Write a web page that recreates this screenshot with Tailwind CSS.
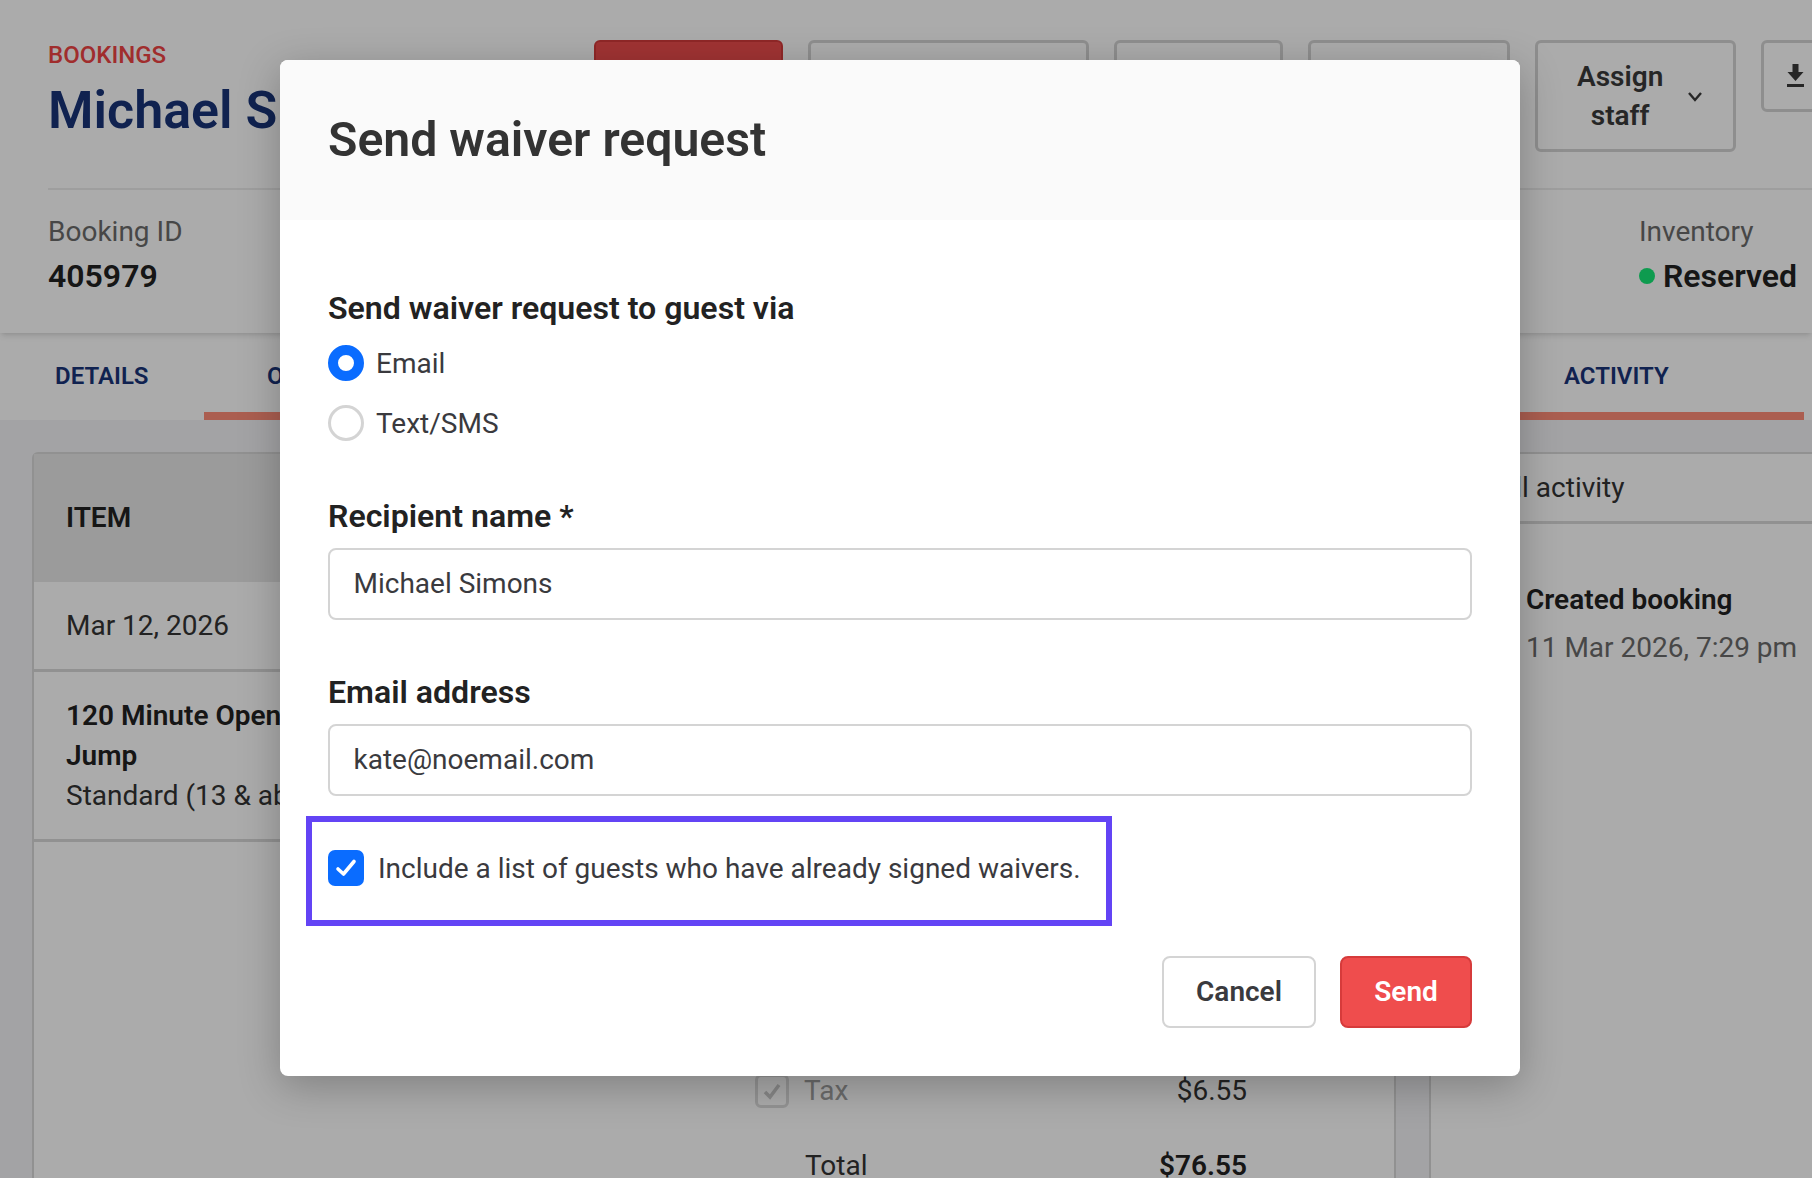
<!DOCTYPE html>
<html>
<head>
<meta charset="utf-8">
<script src="https://cdn.jsdelivr.net/npm/@tailwindcss/browser@4"></script>
</head>
<body class="font-['Roboto',sans-serif]">
<div class="relative w-[1812px] h-[1178px] overflow-hidden bg-[#f3f4f6]">
  <!-- page -->
  <div class="relative z-10 bg-white shadow-md h-[333px]">
    <div class="flex justify-between ml-[48px] h-[190px] border-b-[2px] border-[#ececec]">
      <div class="pt-[40px]">
        <div class="text-[24px] leading-[30px] font-medium text-[#ef4444]">BOOKINGS</div>
        <div class="text-[52px] leading-[60px] mt-[11px] font-semibold text-[#183478] whitespace-nowrap">Michael Simons</div>
      </div>
      <div class="flex items-start gap-[25px] pt-[40px] -mr-[59px]">
        <div class="w-[189px] h-[72px] rounded-[6px] bg-[#ef4d4d] border-[2px] border-[#d63b3b]"></div>
        <div class="w-[281px] h-[72px] rounded-[6px] border-[3px] border-[#d4d4d4]"></div>
        <div class="w-[169px] h-[72px] rounded-[6px] border-[3px] border-[#d4d4d4]"></div>
        <div class="w-[202px] h-[72px] rounded-[6px] border-[3px] border-[#d4d4d4]"></div>
        <div class="w-[201px] h-[112px] rounded-[6px] border-[3px] border-[#d4d4d4] flex items-center gap-[23px] text-[28px] leading-[39px] font-semibold text-[#3a3a3a] text-center pl-[39px]">
          <span>Assign<br>staff</span>
          <svg class="w-[18px] h-[18px]" viewBox="0 0 18 18" fill="none" stroke="#3a3a3a" stroke-width="2.4"><path d="M3 6l6 7 6-7"/></svg>
        </div>
        <div class="w-[110px] h-[72px] rounded-[6px] border-[3px] border-[#d4d4d4] pl-[22px] pt-[21px]">
          <svg class="w-[19px] h-[23px]" viewBox="0 0 19 23" fill="#3a3a3a"><path d="M6.500 0h6v8h5l-8 9-8-9h5zM1 20h17v3H1z"/></svg>
        </div>
      </div>
    </div>
    <div class="flex justify-between pl-[48px] pr-[15px] pt-[25px]">
      <div>
        <div class="text-[28px] leading-[34px] text-[#6b6b6b]">Booking ID</div>
        <div class="text-[32px] leading-[40px] mt-[7px] font-semibold text-[#222]">405979</div>
      </div>
      <div>
        <div class="text-[28px] leading-[34px] text-[#6b6b6b]">Inventory</div>
        <div class="flex items-center gap-[8px] mt-[7px]">
          <span class="w-[16px] h-[16px] rounded-full bg-[#16e877]"></span>
          <span class="text-[32px] leading-[40px] font-semibold text-[#222]">Reserved</span>
        </div>
      </div>
    </div>
  </div>
  <div class="relative h-[87px] bg-white flex items-center text-[24px] font-semibold text-[#183478]">
    <span class="absolute left-[55px] top-[28px] leading-[30px]">DETAILS</span>
    <span class="absolute left-[267px] top-[28px] leading-[30px]">ORDER</span>
    <span class="absolute left-[1564px] top-[28px] leading-[30px]">ACTIVITY</span>
    <div class="absolute left-[204px] right-[8px] bottom-0 h-[8px] bg-[#ff8d78]"></div>
  </div>
  <div class="flex gap-[33px] pl-[32px] pt-[32px]">
    <div class="w-[1364px] h-[760px] bg-white border-x-[2px] border-t-[2px] border-[#d8d8d8] rounded-t-[6px] relative">
      <div class="h-[128px] bg-[#e8e8e8] px-[32px] flex items-center text-[28px] font-semibold text-[#222]">ITEM</div>
      <div class="h-[90px] px-[32px] flex items-center border-b-[3px] border-[#d8d8d8] text-[28px] text-[#333]">Mar 12, 2026</div>
      <div class="h-[170px] px-[32px] pt-[24px] border-b-[3px] border-[#d8d8d8] text-[28px] leading-[40px] text-[#333]">
        <div class="font-semibold text-[#222] w-[260px]">120 Minute Open Jump</div>
        <div>Standard (13 &amp; above)</div>
      </div>
      <div class="absolute left-[721px] top-[620px] w-[34px] h-[34px] rounded-[6px] border-[3px] border-[#dcdcdc] flex items-center justify-center">
        <svg class="w-[20px] h-[20px]" viewBox="0 0 20 20" fill="none" stroke="#c9c9c9" stroke-width="3.5"><path d="M3 11l5 5 9-12"/></svg>
      </div>
      <div class="absolute left-[770px] right-[147px] top-[617px] flex justify-between text-[28px] leading-[40px]">
        <span class="text-[#a0a0a0]">Tax</span><span class="text-[#333]">$6.55</span>
      </div>
      <div class="absolute left-[771px] right-[147px] top-[700px] flex justify-between text-[28px] leading-[24px] text-[#333]">
        <span>Total</span><span class="font-semibold text-[#222]">$76.55</span>
      </div>
    </div>
    <div class="flex-1 h-[760px] bg-white border-l-[2px] border-t-[2px] border-[#d8d8d8]">
      <div class="h-[70px] flex items-center pl-[66px] border-b-[3px] border-[#d8d8d8] text-[28px] text-[#333]">All activity</div>
      <div class="pl-[95px] pt-[58px]">
        <div class="text-[28px] leading-[36px] font-semibold text-[#222] whitespace-nowrap">Created booking</div>
        <div class="text-[28px] leading-[36px] mt-[12px] text-[#6b6b6b] whitespace-nowrap">11 Mar 2026, 7:29 pm</div>
      </div>
    </div>
  </div>

  <!-- overlay -->
  <div class="absolute inset-0 z-20 bg-black/[0.33]"></div>

  <!-- modal -->
  <div class="absolute z-30 left-[280px] top-[60px] w-[1240px] h-[1016px] bg-white rounded-[8px] shadow-[0_10px_40px_rgba(0,0,0,0.25)] overflow-hidden">
    <div class="h-[160px] bg-[#fafafa] flex items-center px-[48px] text-[48.200px] font-semibold text-[#333]">Send waiver request</div>
    <div class="px-[48px] pt-[68px]">
      <div class="text-[32.100px] leading-[40px] font-semibold text-[#222]">Send waiver request to guest via</div>
      <div class="flex items-center gap-[12px] h-[36px] mt-[17px]">
        <span class="w-[36px] h-[36px] rounded-full border-[10.500px] border-[#0a6cff] bg-white"></span>
        <span class="text-[28px] text-[#3a3a3e] pt-[1px]">Email</span>
      </div>
      <div class="flex items-center gap-[12px] h-[36px] mt-[24px]">
        <span class="w-[36px] h-[36px] rounded-full border-[3px] border-[#d4d4d4] bg-white"></span>
        <span class="text-[28px] text-[#3a3a3e] pt-[1px]">Text/SMS</span>
      </div>
      <div class="text-[32.100px] leading-[40px] font-semibold text-[#222] mt-[55px]">Recipient name *</div>
      <div class="h-[72px] mt-[12px] border-[2.500px] border-[#d4d4d4] rounded-[8px] px-[23.500px] flex items-center text-[28px] text-[#3a3a3e]">Michael Simons</div>
      <div class="text-[32.100px] leading-[40px] font-semibold text-[#222] mt-[52px]">Email address</div>
      <div class="h-[72px] mt-[12px] border-[2.500px] border-[#d4d4d4] rounded-[8px] px-[23.500px] flex items-center text-[28px] text-[#3a3a3e]">kate@noemail.com</div>
      <div class="relative flex items-center gap-[14px] h-[36px] mt-[54px]">
        <span class="w-[36px] h-[36px] rounded-[7px] bg-[#0a6cff] flex items-center justify-center">
          <svg class="w-[24px] h-[24px]" viewBox="0 0 24 24" fill="none" stroke="#fff" stroke-width="3.6" stroke-linecap="round" stroke-linejoin="round"><path d="M4 13l5.500 5L20 5.500"/></svg>
        </span>
        <span class="text-[28px] text-[#3a3a3e] pt-[2px]">Include a list of guests who have already signed waivers.</span>
        <div class="absolute left-[-22px] top-[-34px] w-[806px] h-[110px] border-[6px] border-[#6344f5]"></div>
      </div>
      <div class="flex justify-end gap-[24px] mt-[70px]">
        <div class="w-[154px] h-[72px] rounded-[8px] border-[2.500px] border-[#d4d4d4] bg-white flex items-center justify-center text-[28px] font-semibold text-[#3a3a3e]">Cancel</div>
        <div class="w-[132px] h-[72px] rounded-[8px] border-[2px] border-[#d63b3b] bg-[#ef4d4d] flex items-center justify-center text-[28px] font-semibold text-white">Send</div>
      </div>
    </div>
  </div>
</div>
</body>
</html>
